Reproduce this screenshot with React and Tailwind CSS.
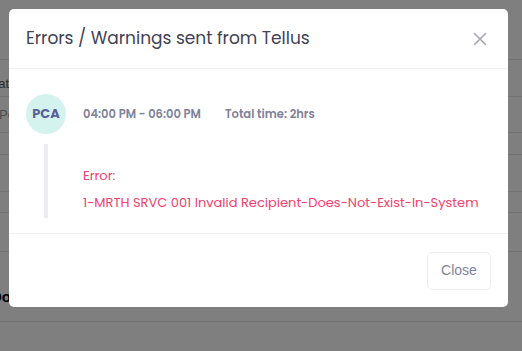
const App = () => {
  return (
    <div className="relative w-[522px] h-[351px] overflow-hidden bg-white font-['Liberation_Sans',sans-serif]">
      {/* page behind the modal */}
      <div className="flex flex-col">
        <div className="h-[60px] border-b border-[#e4e4e4]" />
        <div className="h-[37px] border-b border-[#e4e4e4] flex items-center text-[13px] text-[#555] pt-[12px]">
          <span className="-ml-[14px]">Stat</span>
        </div>
        <div className="h-[36px] border-b border-[#e4e4e4] flex items-center text-[13px] text-[#999]">
          <span className="-ml-[1px]">Pe</span>
        </div>
        <div className="h-[22px] border-b border-[#e4e4e4]" />
        <div className="h-[37px] border-b border-[#e4e4e4]" />
        <div className="h-[21px] border-b border-[#e4e4e4]" />
        <div className="h-[39px] border-b border-[#e4e4e4]" />
        <div className="h-[70px] border-b border-[#e4e4e4] flex items-center text-[15px] font-bold text-black pt-[22px]">
          <span className="-ml-[9px]">Do I</span>
        </div>
      </div>

      {/* overlay */}
      <div className="absolute inset-0 bg-black/50 pt-[9px] pl-[9px]">
        <div className="w-[499px] h-[298px] bg-white rounded-[5px] flex flex-col font-['Poppins','Lato',sans-serif]">
          <div className="h-[60px] flex items-center justify-between pl-[17px] pr-[21px] border-b border-[#eff2f5]">
            <h2 className="text-[17px] text-[#3f4254] font-normal">Errors / Warnings sent from Tellus</h2>
            <svg width="14" height="14" viewBox="0 0 14 14" className="text-[#a1a5b7]">
              <path d="M1.5 1.5 L12.5 12.5 M12.5 1.5 L1.5 12.5" stroke="currentColor" strokeWidth="1.6" strokeLinecap="round" />
            </svg>
          </div>

          <div className="flex-1 pl-[17px] pt-[25px] border-b border-[#eff2f5]">
            <div className="flex items-center">
              <div className="w-[40px] h-[40px] rounded-full bg-[#d4f3ef] flex items-center justify-center text-[13px] font-bold text-[#5a5f9a]">
                PCA
              </div>
              <span className="ml-[17px] mt-[2px] text-[11.5px] font-semibold text-[#7e8299]">04:00 PM - 06:00 PM</span>
              <span className="ml-[24px] mt-[2px] text-[11.5px] font-semibold text-[#7e8299]">Total time: 2hrs</span>
            </div>
            <div className="flex mt-[10px]">
              <div className="w-[4px] h-[74px] bg-[#ebebf0] ml-[18px]" />
              <div className="ml-[35px] pt-[22px] text-[13px] text-[#f1416c] flex flex-col gap-[7px]">
                <span>Error:</span>
                <span>1-MRTH SRVC 001 Invalid Recipient-Does-Not-Exist-In-System</span>
              </div>
            </div>
          </div>

          <div className="h-[73px] flex items-center justify-end pr-[17px]">
            <button className="w-[64px] h-[38px] rounded-[5px] border border-[#ececf5] text-[14px] text-[#7e8299] font-['Liberation_Sans',sans-serif]">
              Close
            </button>
          </div>
        </div>
      </div>
    </div>
  );
};

export default App;
